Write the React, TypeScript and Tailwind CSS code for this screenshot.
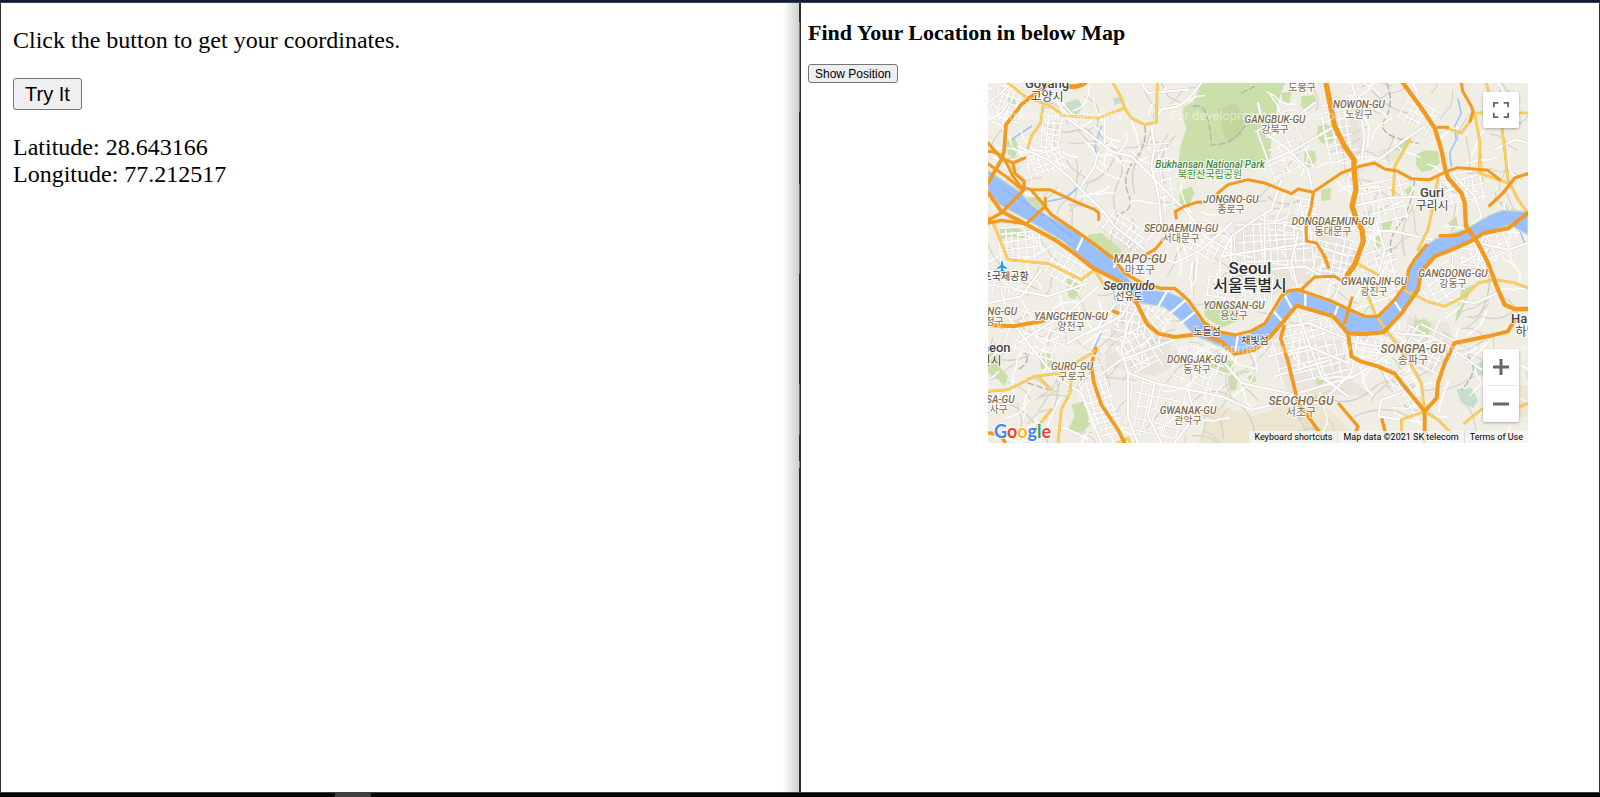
import { useState } from "react";

type Pt = [number, number];

const river =
  "M0 261L36 286 96 326 136 371 176 396 276 451 326 496 361 516 400 566 436 601 476 621 536 626 586 646 626 696 656 731 716 756 776 756 821 731 856 691 886 641 916 621 966 636 1026 656 1076 681 1126 701 1171 701 1216 656 1256 606 1262 556 1276 530 1306 491 1346 466 1436 436 1506 396 1546 381 1620 386V456L1566 426 1486 451 1446 476 1386 506 1336 520 1300 566 1286 626 1246 686 1186 748 1126 754 1076 751 1036 706 986 686 926 666 846 756 816 786 776 806 736 811 676 781 616 756 602 738 572 706 526 672 466 662 441 656 416 606 376 591 316 556 226 476 126 416 36 366 0 326Z";

const parks = [
  "M641 0L616 56 586 72 582 100 596 136 580 180 572 230 570 285 640 290 700 276 790 240 846 228 851 156 870 56 890 0Z",
  "M990 130L1010 122 1040 135 1046 160 1030 182 1000 180 986 160Z",
  "M950 200L980 205 985 235 965 255 948 240Z",
  "M1285 215L1310 202 1350 205 1356 240 1330 262 1300 266 1284 245Z",
  "M1000 320L1030 315 1026 350 1000 355Z",
  "M576 325L610 310 620 330 600 375 574 365Z",
  "M300 455L340 450 400 500 395 530 340 500 300 480Z",
  "M110 345L150 340 170 372 165 390 130 375Z",
  "M650 675L700 650 750 665 755 710 700 735 650 700Z",
  "M150 810L190 805 196 850 160 860Z",
  "M250 965L290 955 310 1020 280 1050 240 1040 260 1000Z",
  "M665 845L700 830 740 835 735 865 700 875 668 860Z",
  "M1280 715L1310 708 1330 725 1322 755 1290 760 1276 742Z",
  "M0 790L22 780 34 850 60 880 50 910 20 880 0 870Z",
  "M235 590L260 580 275 610 262 650 240 640Z",
  "M1420 620L1455 605 1440 640 1415 700 1400 720Z",
  "M940 40L980 36 985 60 960 85 940 70Z",
  "M35 435L80 430 116 450 110 466 60 462 40 470Z",
  "M985 885L1010 875 1004 905 985 905Z",
  "M1180 420L1215 410 1205 440 1185 445Z",
  "M50 175L80 165 92 190 80 225 60 215Z",
  "M720 880L750 870 745 920 725 925Z",
  "M1165 460L1185 455 1180 490 1160 500Z",
  "M1380 420L1405 400 1410 430 1395 440Z",
  "M1250 320L1268 308 1275 325 1260 340Z",
  "M780 880L800 872 806 895 786 900Z",
  "M960 940L990 935 985 965 965 960Z",
  "M880 30L910 26 905 60 885 62Z",
];

const woods = [
  "M230 60L270 48 285 70 270 95 235 90Z",
  "M1210 200L1250 160 1260 180 1250 205Z",
  "M1405 920L1450 915 1470 950 1456 975 1420 960Z",
  "M1455 850L1490 830 1500 870 1470 880Z",
  "M60 45L80 42 84 62 65 68Z",
  "M375 45L400 42 400 60 380 66Z",
];

const sands = [
  "M1170 200L1210 195 1250 210 1230 235 1180 230Z",
  "M630 1080L660 1000 720 975 800 1000 900 960 1010 970 1090 1040 1100 1080Z",
  "M680 75L740 60 770 110 750 160 700 170Z",
  "M1500 960L1560 900 1620 910V1000L1540 1010Z",
];

const urban = [
  "M740 420L880 390 1080 420 1090 560 960 590 850 640 720 600Z",
  "M850 780L1060 770 1080 880 1150 940 900 930Z",
  "M1260 700L1380 720 1400 790 1330 880 1240 830Z",
  "M380 650L520 740 590 830 500 880 350 850Z",
  "M1040 40L1100 60 1130 220 1040 190Z",
  "M330 430L460 480 500 520 420 530Z",
];

const orange: [string, number][] = [
  ["M244 10Q270 14 290 0", 14],
  ["M190 0L150 25 100 65 54 125 48 205 40 230 0 300", 11],
  ["M0 180L40 225 75 240 110 225M75 240L80 270 108 295 108 320 40 390 0 412", 10],
  ["M0 205Q30 205 50 230L75 280 100 312 130 320 185 320 260 355 320 380 332 390V410", 9],
  ["M0 242L60 285 100 318M130 322L150 345 172 370 112 425M172 370V345", 9],
  ["M0 328L40 385 112 422 200 470 266 516 316 556 376 586 400 600 446 660 478 724 512 752 560 762 640 752 700 776 740 812 800 800 846 762 926 668 1036 700 1080 751 1126 754 1186 748 1240 692 1290 620 1300 566 1340 520 1376 506 1446 476 1486 451 1560 436 1620 390", 12],
  ["M0 420L40 412 112 422M172 372L190 395 280 455 376 526 410 570 460 600 520 616 560 616 600 650 650 720 690 746 740 756 790 744 830 722 880 640 900 624 930 620 1030 654 1080 678 1130 700 1170 700 1220 650 1256 600 1262 560 1280 530 1315 486", 10],
  ["M565 405L562 385 590 370 625 358 640 358M685 340L690 330 720 305 780 290 830 300 910 332 930 318 975 328 1060 270 1115 250 1160 240 1190 258 1230 265 1270 287 1325 290 1376 265 1410 254 1500 262 1535 290M478 512L500 500 530 465", 9],
  ["M1014 0L1040 130 1070 190 1098 230V260L1104 320 1092 370 1106 410 1122 440 1126 475 1100 545 1078 576", 16],
  ["M976 330L970 370 954 430 956 475 985 480 1010 520 1022 553", 9],
  ["M1245 0L1300 75 1340 135 1360 200 1372 260 1380 285 1420 330 1430 360 1434 430 1470 480 1500 540 1530 620 1550 665 1580 678H1620", 13],
  ["M1420 0L1424 25 1450 70 1455 85 1446 115M1350 133H1380", 9],
  ["M1505 368L1545 330 1580 285 1620 272M1356 458H1405L1446 440", 10],
  ["M940 620L980 582 1040 580 1056 590M1092 644L1070 720M1006 516L1020 550", 9],
  ["M888 730L878 765 900 835 930 960 960 1000 996 1050", 11],
  ["M1080 751L1090 820 1120 836 1170 850 1220 872 1245 905 1290 960 1310 985V1080M1310 985L1346 945 1350 900 1370 840 1400 780 1500 760 1560 745 1580 710", 12],
  ["M1053 963L1110 1030 1100 1055M1182 1010L1195 1060", 10],
  ["M0 726L75 730 165 714", 12],
  ["M376 685L390 690M315 825L310 850 318 900 340 965 390 1040 410 1080M322 795L320 810", 11],
  ["M0 1050Q40 1050 52 1080", 10],
];

const yellow = [
  "M60 0L110 40 190 70 225 98 330 105 410 75 400 45 375 0M410 75L430 105 470 125 505 118 508 0",
  "M165 70L158 120 130 160 120 195",
  "M0 400L20 430 40 480 60 530 180 542 240 570 280 590M280 590L320 560 350 610 380 616",
  "M0 925L60 920 140 880 220 870 270 835 330 800M150 880L190 920M250 890L246 930 220 980 210 1080M190 980L150 1030",
  "M1266 170L1220 250 1216 335M1350 285L1335 370 1320 440 1290 500 M1372 135L1420 150 1446 115 1460 90",
  "M1495 0L1510 60 1540 120 1550 200 1560 290 1590 350 1620 390M1460 90L1476 180 1474 270 1500 280 1560 300M1460 90H1620",
  "M1246 620L1320 656 1370 670 1430 640 1470 600 1520 590 1580 600 1620 615M1140 640L1160 690 1200 750 1260 830 1300 900 1310 985",
  "M1104 540L1170 575M1310 985L1240 1010 1240 1060M1310 985L1350 1010 1400 1060M1430 1020L1480 980 1560 990 1620 960",
  "M390 1080L420 1065 426 1080",
];

const white = [
  "M640 0L600 50 570 70 520 80 490 130 500 190 490 250 510 330 520 420 480 470",
  "M225 98L300 150 370 205 430 220 480 270 540 330 600 390 650 460 720 500",
  "M90 190L180 230 240 280 290 330 350 390 380 430 470 500 560 540 640 500 730 420",
  "M330 210L320 250 280 310M350 180L350 110",
  "M810 60L830 150 900 200 960 260 975 328M830 150L900 120 980 60M830 240L920 200 1040 130",
  "M1092 370L1200 345 1330 340 1420 310M1106 440L1220 445 1330 470 1400 500",
  "M1160 240L1250 170 1310 130M1120 240L1130 160 1110 60 1090 0",
  "M880 290L850 380 800 410 730 460 700 520M730 460V600L700 670M830 390V660",
  "M930 450L910 540 930 620M700 520L830 500 960 480 1080 520",
  "M760 540L830 560 950 550 1040 600M1170 575L1190 500 1160 400",
  "M860 740L960 720 1110 780 1240 800 1340 770M930 690L1000 880 1080 940",
  "M1110 760L1090 870 1000 960 930 960M1220 750L1330 760 1400 800",
  "M840 820L960 790 1080 840M860 880L1030 830M900 940L1100 880 1240 790",
  "M460 650L420 720 400 800 420 870 500 900 600 920 700 940 790 980 880 960",
  "M330 880L400 830 480 800 560 770M300 750L400 700 440 640M240 780L330 730 400 640",
  "M420 870V1000L450 1080M500 900L480 1000 520 1080M600 920L620 1000 560 1080",
  "M90 780L170 730 240 690 330 610M0 560L80 620 180 640 300 600",
  "M40 620L60 700 120 780 200 880 280 930 340 1080M0 660L100 640 160 560",
  "M540 620L580 700 640 760M520 690L590 620M700 830L760 900 900 930",
  "M1380 650L1460 660 1530 630M1420 540L1460 520 1500 430M1470 480L1560 500 1620 480",
  "M1400 280L1460 340 1480 400 1434 440M1520 200L1580 170 1620 180",
  "M1240 1010L1170 1000 1180 950 1240 930M1380 790L1440 830 1480 860",
  "M0 60L40 30 70 0M0 110L40 90 60 60M460 0L480 30 600 20",
];

const bridges = "M268 500L284 464M378 552L394 522M512 668L536 626M548 690L606 640M580 720L630 680M884 716L858 686M910 672L890 636M952 672V632M1038 702L1050 668M1240 686L1216 650M740 815L750 756";

const greyLines =
  "M520 0L540 40 580 60M290 40Q340 60 330 110T380 200M380 200Q420 240 390 300T400 420M300 300Q360 280 380 220M180 130Q230 160 270 140T330 200M460 210Q420 260 440 330M620 950Q680 900 740 950T800 1060M900 980Q950 1000 960 1080M1010 940Q1080 980 1150 920T1270 940M1100 1000Q1190 960 1260 1000M1440 560Q1520 540 1500 630T1440 700M1480 700Q1540 720 1580 680M1150 20Q1200 80 1260 90M1500 100Q1560 150 1600 120M1270 380Q1230 440 1250 520M1360 800Q1440 820 1500 760M0 960Q70 950 120 1000T180 1080M20 560Q90 590 150 620M40 830Q100 840 140 800M560 160Q500 220 530 300M840 340Q880 380 940 350M1120 290Q1180 300 1240 340";

const dashes =
  "M470 130Q480 180 440 230T420 330 400 390M616 70Q650 60 660 110T670 185Q730 190 770 130M1196 0Q1220 60 1190 110T1290 180M1280 290Q1270 380 1230 430T1220 530M100 800Q140 830 90 860M120 900L180 920M1440 820Q1480 860 1420 920M760 30L800 10";

const streams =
  "M1410 50L1420 90 1400 130 1405 170 1385 210 1390 250M340 130L320 190 330 230 290 300 230 345 180 355M372 600L380 640 376 680M346 690L340 750 316 800M130 130L70 170M1434 370V430M1590 430L1610 480";

const patches: [number, number, number, number, number, number][] = [
  [20, 0, 90, 120, 20, 20],
  [160, 100, 60, 110, 5, 20],
  [120, 205, 110, 70, -20, 18],
  [330, 410, 150, 70, 35, 20],
  [35, 430, 130, 100, -5, 22],
  [180, 510, 130, 110, 30, 22],
  [740, 420, 230, 130, -3, 27],
  [980, 460, 130, 140, 12, 24],
  [860, 690, 220, 200, -14, 29],
  [1080, 760, 130, 80, 15, 24],
  [1240, 740, 150, 120, 28, 24],
  [1130, 500, 110, 150, -18, 24],
  [480, 640, 90, 90, -38, 22],
  [370, 640, 110, 120, 10, 24],
  [400, 740, 110, 130, -30, 21],
  [290, 850, 90, 210, -16, 20],
  [1240, 60, 110, 80, 30, 20],
  [1010, 60, 90, 180, -10, 24],
  [1360, 270, 130, 90, -10, 22],
  [1390, 500, 110, 100, 8, 24],
  [1450, 460, 130, 80, -22, 24],
  [500, 180, 60, 210, -8, 26],
  [1300, 550, 130, 100, -30, 28],
  [0, 560, 110, 80, 10, 24],
  [60, 700, 170, 120, 18, 30],
  [600, 420, 120, 100, 30, 24],
  [900, 350, 90, 100, 15, 24],
  [560, 800, 150, 120, 20, 28],
  [660, 570, 200, 90, 8, 26],
  [830, 90, 120, 200, -22, 34],
  [1130, 290, 140, 140, -14, 30],
  [1230, 860, 80, 140, -28, 22],
  [420, 910, 180, 150, 12, 32],
];

function random(seed: number) {
  let s = seed;
  return () => {
    s = (s * 16807) % 2147483647;
    return s / 2147483647;
  };
}

function gridPath([x, y, w, h, angle, step]: (typeof patches)[number], seed: number) {
  const rnd = random(seed * 977 + 13);
  const a = (angle * Math.PI) / 180;
  const cx = x + w / 2;
  const cy = y + h / 2;
  const place = ([px, py]: Pt) =>
    `${Math.round(cx + px * Math.cos(a) - py * Math.sin(a))} ${Math.round(cy + px * Math.sin(a) + py * Math.cos(a))}`;
  let d = "";
  for (let i = -w / 2; i <= w / 2; i += step * (0.75 + rnd() * 0.5)) {
    d += `M${place([i, (-h / 2) * (0.6 + rnd() * 0.5)])}L${place([i + rnd() * 10 - 5, (h / 2) * (0.6 + rnd() * 0.5)])}`;
  }
  for (let j = -h / 2; j <= h / 2; j += step * (0.75 + rnd() * 0.5)) {
    d += `M${place([(-w / 2) * (0.6 + rnd() * 0.5), j])}L${place([(w / 2) * (0.6 + rnd() * 0.5), j + rnd() * 10 - 5])}`;
  }
  return d;
}

function lanePath(seed: number, count: number) {
  const rnd = random(seed);
  let d = "";
  for (let i = 0; i < count; i++) {
    let x = rnd() * 1620;
    let y = rnd() * 1080;
    if (x > 560 && x < 880 && y < 300) continue;
    let dir = rnd() * Math.PI * 2;
    d += `M${Math.round(x)} ${Math.round(y)}L`;
    for (let k = 0; k < 4; k++) {
      dir += rnd() - 0.5;
      x += Math.cos(dir) * 24;
      y += Math.sin(dir) * 24;
      d += `${Math.round(x)} ${Math.round(y)} `;
    }
  }
  return d;
}

const grids = patches.map((p, i) => gridPath(p, i + 1)).join("");
const lanes = lanePath(4211, 230);
const greyLanes = lanePath(9187, 210);

type Kind = "district" | "wide" | "city" | "capital" | "park" | "island" | "place";
type Label = { en?: string; ko?: string; x: number; y: number; kind: Kind };

const labels: Label[] = [
  { en: "Goyang", ko: "고양시", x: 59, y: 5, kind: "city" },
  { en: "NOWON-GU", ko: "노원구", x: 371, y: 25, kind: "district" },
  { en: "GANGBUK-GU", ko: "강북구", x: 287, y: 40, kind: "district" },
  { ko: "도봉구", x: 314, y: -2, kind: "district" },
  { en: "Bukhansan National Park", ko: "북한산국립공원", x: 222, y: 85, kind: "park" },
  { en: "JONGNO-GU", ko: "종로구", x: 243, y: 120, kind: "district" },
  { en: "SEODAEMUN-GU", ko: "서대문구", x: 193, y: 149, kind: "district" },
  { en: "DONGDAEMUN-GU", ko: "동대문구", x: 345, y: 142, kind: "district" },
  { en: "Guri", ko: "구리시", x: 444, y: 114, kind: "city" },
  { en: "MAPO-GU", ko: "마포구", x: 152, y: 180, kind: "wide" },
  { en: "Seoul", ko: "서울특별시", x: 262, y: 191, kind: "capital" },
  { en: "Seonyudo", ko: "선유도", x: 141, y: 207, kind: "island" },
  { en: "YONGSAN-GU", ko: "용산구", x: 246, y: 226, kind: "district" },
  { en: "GWANGJIN-GU", ko: "광진구", x: 386, y: 202, kind: "district" },
  { en: "GANGDONG-GU", ko: "강동구", x: 465, y: 194, kind: "district" },
  { en: "YANGCHEON-GU", ko: "양천구", x: 83, y: 237, kind: "district" },
  { en: "GURO-GU", ko: "구로구", x: 84, y: 287, kind: "district" },
  { en: "DONGJAK-GU", ko: "동작구", x: 209, y: 280, kind: "district" },
  { en: "GWANAK-GU", ko: "관악구", x: 200, y: 331, kind: "district" },
  { en: "SEOCHO-GU", ko: "서초구", x: 313, y: 322, kind: "wide" },
  { en: "SONGPA-GU", ko: "송파구", x: 425, y: 270, kind: "wide" },
  { en: "OJEONG-GU", ko: "오정구", x: 2, y: 232, kind: "district" },
  { en: "SOSA-GU", ko: "소사구", x: 6, y: 320, kind: "district" },
  { ko: "노들섬", x: 219, y: 242, kind: "place" },
  { ko: "채빛섬", x: 267, y: 251, kind: "place" },
  { ko: "김포국제공항", x: 13, y: 187, kind: "place" },
  { en: "Bucheon", ko: "부천시", x: -3, y: 269, kind: "city" },
  { en: "Hanam", ko: "하남시", x: 544, y: 240, kind: "city" },
];

const enStyle: Record<Kind, string> = {
  district: "fill-[#7d6b51] text-[10px] font-medium italic",
  wide: "fill-[#7d6b51] text-[12px] font-medium italic",
  city: "fill-[#444444] text-[13px] font-medium",
  capital: "fill-[#2f2f2f] text-[17px] font-medium",
  park: "fill-[#3f8a42] text-[10px] font-medium italic",
  island: "fill-[#444444] text-[12px] font-medium italic",
  place: "fill-[#444444] text-[10px] font-medium",
};
const koStyle: Record<Kind, string> = {
  district: "fill-[#7d6b51] text-[10px] font-normal",
  wide: "fill-[#7d6b51] text-[11px] font-normal",
  city: "fill-[#444444] text-[12px] font-normal",
  capital: "fill-[#2f2f2f] text-[16px] font-medium",
  park: "fill-[#3f8a42] text-[10px] font-normal",
  island: "fill-[#444444] text-[10px] font-normal",
  place: "fill-[#444444] text-[10px] font-normal",
};
const koGap: Record<Kind, number> = {
  district: 10,
  wide: 11,
  city: 13,
  capital: 17,
  park: 10,
  island: 10,
  place: 10,
};

const halo = "stroke-white/80 [paint-order:stroke] [stroke-width:2px] [stroke-linejoin:round]";

function MapDrawing() {
  return (
    <svg viewBox="0 0 540 360" className="block h-full w-full" role="img" aria-label="Seoul">
      <rect width="540" height="360" fill="#f0ede5" />
      <g transform="scale(0.333333)" fill="none" strokeLinejoin="round" strokeLinecap="round">
        {urban.map((d) => (
          <path key={d} d={d} fill="#e9e5dc" />
        ))}
        {sands.map((d) => (
          <path key={d} d={d} fill="#e9dfc1" fillOpacity="0.6" />
        ))}
        {parks.map((d) => (
          <path key={d} d={d} fill="#cadfaa" />
        ))}
        <path d="M690 80L740 60 770 100 760 160 720 180 700 130Z" fill="#c3d69b" />
        {woods.map((d) => (
          <path key={d} d={d} fill="#c5dfca" />
        ))}
        <path d={greyLines} stroke="#d3cfc8" strokeWidth="4" />
        <path d={greyLanes} stroke="#d6d2cb" strokeWidth="3.5" />
        <path d={dashes} stroke="#b4b2b0" strokeWidth="4" strokeDasharray="18 10" />
        <path d={streams} stroke="#a3c4fb" strokeWidth="5" />
        <path d={lanes} stroke="#ffffff" strokeWidth="4" />
        <path d={grids} stroke="#d9d5ce" strokeWidth="6.5" />
        <path d={grids} stroke="#ffffff" strokeWidth="4.5" />
        {white.map((d) => (
          <path key={d} d={d} stroke="#d5d1ca" strokeWidth="9" />
        ))}
        {white.map((d) => (
          <path key={d} d={d} stroke="#ffffff" strokeWidth="6.5" />
        ))}
        <path d={river} fill="#99bfff" stroke="#cfdfbd" strokeWidth="4" />
        <path d="M48 322L126 368 200 420 262 470" stroke="#7c9dd8" strokeWidth="2" strokeDasharray="22 10" />
        <path d={bridges} stroke="#ffffff" strokeWidth="7" />
        {yellow.map((d) => (
          <g key={d}>
            <path d={d} stroke="#e8b64a" strokeWidth="8" />
            <path d={d} stroke="#fbd05f" strokeWidth="6" />
          </g>
        ))}
        {orange.map(([d, w]) => (
          <path key={d} d={d} stroke="#f29a1f" strokeWidth={w} />
        ))}
      </g>
      <g className="font-[Roboto,sans-serif] text-[13px]" fill="#ffffff" fillOpacity="0.5">
        <text x="-46" y="37">For development purposes only</text>
        <text x="182" y="37">For development purposes only</text>
        <text x="-46" y="270">For development purposes only</text>
        <text x="182" y="270">For development purposes only</text>
        <text x="392" y="270">For development purposes only</text>
      </g>
      <path d="M14 178l1 1v3l4 3v1l-4-1v2l2 1v1h-6v-1l2-1v-2l-4 1v-1l4-3v-3z" fill="#1aa0e8" />
      {labels.map((l) => (
        <g key={`${l.en}${l.ko}`} textAnchor="middle" className={halo}>
          {l.en && (
            <text x={l.x} y={l.y} className={`font-[Roboto,sans-serif] ${enStyle[l.kind]}`}>
              {l.en}
            </text>
          )}
          {l.ko && (
            <text
              x={l.x}
              y={l.y + koGap[l.kind]}
              className={`font-["Noto_Sans_CJK_KR",sans-serif] ${koStyle[l.kind]}`}
            >
              {l.ko}
            </text>
          )}
        </g>
      ))}
    </svg>
  );
}

const logo: [string, string][] = [
  ["G", "text-[#4285f4]"],
  ["o", "text-[#ea4335]"],
  ["o", "text-[#fbbc04]"],
  ["g", "text-[#4285f4]"],
  ["l", "text-[#34a853]"],
  ["e", "text-[#ea4335]"],
];

function MapWidget() {
  return (
    <section aria-label="Map" className="relative ml-[180px] h-[360px] w-[540px] overflow-hidden font-[Roboto,sans-serif]">
      <MapDrawing />
      <button
        type="button"
        aria-label="Toggle fullscreen view"
        className="absolute top-[9px] right-[9px] flex size-9 items-center justify-center rounded-xs bg-white shadow-[0_1px_3px_rgba(0,0,0,0.3)]"
      >
        <svg viewBox="0 0 18 18" className="size-4" fill="#666666">
          <path d="M0 0v6h2V2h4V0H0zm16 0h-4v2h4v4h2V0h-2zm0 16h-4v2h6v-6h-2v4zM2 12H0v6h6v-2H2v-4z" />
        </svg>
      </button>
      <div className="absolute right-[9px] bottom-[21px] flex w-9 flex-col items-center rounded-xs bg-white shadow-[0_1px_3px_rgba(0,0,0,0.3)]">
        <button type="button" aria-label="Zoom in" className="flex size-9 items-center justify-center">
          <svg viewBox="0 0 16 16" className="size-4" fill="#666666">
            <path d="M6.5 0h3v6.5H16v3H9.5V16h-3V9.5H0v-3h6.5z" />
          </svg>
        </button>
        <div className="h-px w-[27px] bg-[#e6e6e6]" />
        <button type="button" aria-label="Zoom out" className="flex size-9 items-center justify-center">
          <svg viewBox="0 0 16 16" className="size-4" fill="#666666">
            <path d="M0 6.5h16v3H0z" />
          </svg>
        </button>
      </div>
      <a
        href="#google"
        className="absolute bottom-0 left-[6px] font-[Lato,sans-serif] text-[18px] leading-6 font-bold [paint-order:stroke] [-webkit-text-stroke:2px_#fffc]"
      >
        {logo.map(([c, color], i) => (
          <span key={i} className={color}>
            {c}
          </span>
        ))}
      </a>
      <div className="absolute right-0 bottom-0 flex h-3 items-center bg-[#f5f5f5]/80 text-[9px] leading-3 text-black">
        <button type="button" className="px-[5px]">Keyboard shortcuts</button>
        <span className="border-l border-[#dddddd] px-[5px]">Map data ©2021 SK telecom</span>
        <a href="#terms" className="border-l border-[#dddddd] px-[5px]">Terms of Use</a>
      </div>
    </section>
  );
}

export default function App() {
  const [located, setLocated] = useState(true);
  return (
    <div className="flex min-h-screen flex-col bg-white text-black">
      <div className="h-[3px] border-b border-[#3b4258] bg-[#141a35]" />
      <div className="grid grow grid-cols-[1fr_2px_1fr]">
        <main className="flex min-w-0 border-l border-[#333333]">
          <div className='grow pt-6 pl-3 font-["Liberation_Serif",serif] text-[24px] leading-[27px]'>
            <p>Click the button to get your coordinates.</p>
            <button
              type="button"
              onClick={() => setLocated(true)}
              className='mt-6 block h-8 rounded-[3px] border border-[#767676] bg-[#efefef] px-[11px] font-["Liberation_Sans",sans-serif] text-[20px] leading-7'
            >
              Try It
            </button>
            {located && (
              <p className="mt-6">
                Latitude: 28.643166
                <br />
                Longitude: 77.212517
              </p>
            )}
          </div>
          <div className="w-4 bg-linear-to-r from-white to-[#cfcfcf]" />
        </main>
        <div className="flex bg-[#2b2c2e]">
          <div className="flex w-px flex-col">
            <div className="mt-[19px] h-[90px] bg-[#7b7b7b]" />
            <div className="mt-[72px] h-[90px] bg-[#6f7072]" />
            <div className="mt-[110px] h-[51px] bg-[#7d6a54]" />
            <div className="mt-[26px] h-[7px] bg-[#8d8778]" />
          </div>
        </div>
        <main className="min-w-0 border-r border-[#333333] pt-[18px] pl-[7px]">
          <h3 className='font-["Liberation_Serif",serif] text-[22px] leading-6 font-bold'>
            Find Your Location in below Map
          </h3>
          <button
            type="button"
            className='mt-[19px] block h-[19px] rounded-[3px] border border-[#767676] bg-[#efefef] px-1.5 font-["Liberation_Sans",sans-serif] text-[12px] leading-4'
          >
            Show Position
          </button>
          <MapWidget />
        </main>
      </div>
      <div className="h-[5px] border-t border-[#3f3f3f] bg-[#080607]">
        <div className="ml-[335px] h-full w-9 bg-[#3f3f3f]" />
      </div>
    </div>
  );
}
